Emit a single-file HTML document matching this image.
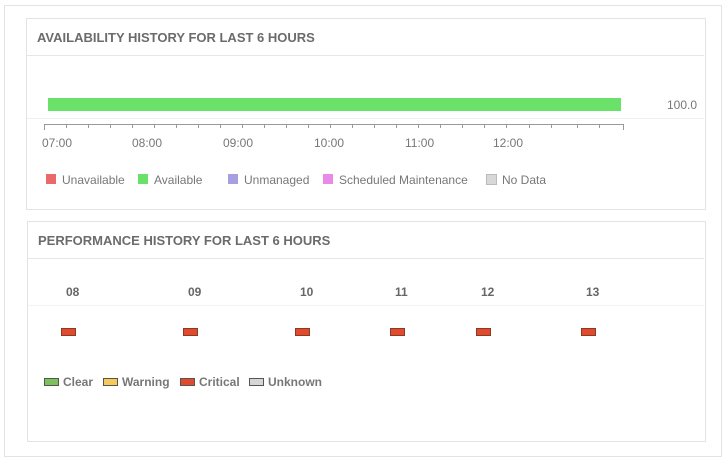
<!DOCTYPE html>
<html><head><style>
body{margin:0;width:726px;height:463px;background:#fff;font-family:"Liberation Sans",Arial,sans-serif;position:relative;overflow:hidden}
.a{position:absolute}
.box{border:1px solid #e3e3e3}
.h{font-size:13px;color:#6b6b6b;font-weight:bold;}
.t{font-size:12px;color:#777}
.n{font-size:12px;color:#666;font-weight:bold}
.sw{position:absolute;width:10px;height:10px}
.rb{position:absolute;width:13px;height:6px;background:#e24a2c;border:1px solid #8a3a2a}
.lg{position:absolute;width:13px;height:6px;border:1px solid #555}
</style></head><body>
<div class="a box" style="left:4px;top:5px;width:716px;height:450px"></div>
<div class="a box" style="left:26px;top:18px;width:678px;height:190px"></div>
<div class="a" style="left:27px;top:55px;width:677px;height:1px;background:#e6e6e6"></div>
<div class="a h" style="left:37px;top:30px">AVAILABILITY HISTORY FOR LAST 6 HOURS</div>
<div class="a" style="left:27px;top:118px;width:677px;height:1px;background:#f0f0f0"></div>
<div class="a" style="left:48px;top:98px;width:573px;height:13px;background:#6ae26a"></div>
<div class="a t" style="left:667px;top:98px">100.0</div>
<svg class="a" style="left:0;top:0" width="726" height="140">
<g stroke="#999" stroke-width="1">
<line x1="44" y1="124.5" x2="624" y2="124.5"/>
<line x1="44.5" y1="124" x2="44.5" y2="130"/>
<line x1="66.5" y1="124" x2="66.5" y2="128"/><line x1="88.5" y1="124" x2="88.5" y2="128"/><line x1="110.5" y1="124" x2="110.5" y2="128"/><line x1="132.5" y1="124" x2="132.5" y2="128"/><line x1="154.5" y1="124" x2="154.5" y2="128"/><line x1="176.5" y1="124" x2="176.5" y2="128"/><line x1="198.5" y1="124" x2="198.5" y2="128"/><line x1="220.5" y1="124" x2="220.5" y2="128"/><line x1="242.5" y1="124" x2="242.5" y2="128"/><line x1="264.5" y1="124" x2="264.5" y2="128"/><line x1="286.5" y1="124" x2="286.5" y2="128"/><line x1="308.5" y1="124" x2="308.5" y2="128"/><line x1="330.5" y1="124" x2="330.5" y2="128"/><line x1="352.5" y1="124" x2="352.5" y2="128"/><line x1="374.5" y1="124" x2="374.5" y2="128"/><line x1="396.5" y1="124" x2="396.5" y2="128"/><line x1="418.5" y1="124" x2="418.5" y2="128"/><line x1="440.5" y1="124" x2="440.5" y2="128"/><line x1="462.5" y1="124" x2="462.5" y2="128"/><line x1="484.5" y1="124" x2="484.5" y2="128"/><line x1="506.5" y1="124" x2="506.5" y2="128"/><line x1="529.5" y1="124" x2="529.5" y2="128"/><line x1="551.5" y1="124" x2="551.5" y2="128"/><line x1="577.5" y1="124" x2="577.5" y2="128"/><line x1="599.5" y1="124" x2="599.5" y2="128"/><line x1="623.5" y1="124" x2="623.5" y2="130"/>
</g></svg>
<div class="a t" style="left:42px;top:136px">07:00</div>
<div class="a t" style="left:132px;top:136px">08:00</div>
<div class="a t" style="left:223px;top:136px">09:00</div>
<div class="a t" style="left:314px;top:136px">10:00</div>
<div class="a t" style="left:405px;top:136px">11:00</div>
<div class="a t" style="left:493px;top:136px">12:00</div>
<div class="sw" style="left:46px;top:174px;background:#e86a6a"></div><div class="a t" style="left:62px;top:173px">Unavailable</div>
<div class="sw" style="left:138px;top:174px;background:#6ae26a"></div><div class="a t" style="left:154px;top:173px">Available</div>
<div class="sw" style="left:228px;top:174px;background:#a6a0e0"></div><div class="a t" style="left:244px;top:173px">Unmanaged</div>
<div class="sw" style="left:323px;top:174px;background:#e88ae8"></div><div class="a t" style="left:339px;top:173px">Scheduled Maintenance</div>
<div class="sw" style="left:486px;top:174px;background:#d8d8d8;border:1px solid #bbb;width:9px;height:9px"></div><div class="a t" style="left:502px;top:173px">No Data</div>

<div class="a box" style="left:27px;top:221px;width:677px;height:219px"></div>
<div class="a" style="left:28px;top:258px;width:676px;height:1px;background:#e6e6e6"></div>
<div class="a h" style="left:38px;top:233px">PERFORMANCE HISTORY FOR LAST 6 HOURS</div>
<div class="a" style="left:28px;top:305px;width:676px;height:1px;background:#f3f3f3"></div>
<div class="a n" style="left:66px;top:285px">08</div>
<div class="a n" style="left:188px;top:285px">09</div>
<div class="a n" style="left:300px;top:285px">10</div>
<div class="a n" style="left:395px;top:285px">11</div>
<div class="a n" style="left:481px;top:285px">12</div>
<div class="a n" style="left:586px;top:285px">13</div>
<div class="rb" style="left:61px;top:328px"></div>
<div class="rb" style="left:183px;top:328px"></div>
<div class="rb" style="left:295px;top:328px"></div>
<div class="rb" style="left:390px;top:328px"></div>
<div class="rb" style="left:476px;top:328px"></div>
<div class="rb" style="left:581px;top:328px"></div>
<div class="lg" style="left:44px;top:378px;background:#7cc25a"></div><div class="a n" style="left:63px;top:375px;font-size:12px;color:#777">Clear</div>
<div class="lg" style="left:103px;top:378px;background:#f5c95a"></div><div class="a n" style="left:122px;top:375px;color:#777">Warning</div>
<div class="lg" style="left:180px;top:378px;background:#e24a2c"></div><div class="a n" style="left:199px;top:375px;color:#777">Critical</div>
<div class="lg" style="left:249px;top:378px;background:#d6d6d6"></div><div class="a n" style="left:268px;top:375px;color:#777">Unknown</div>
</body></html>
